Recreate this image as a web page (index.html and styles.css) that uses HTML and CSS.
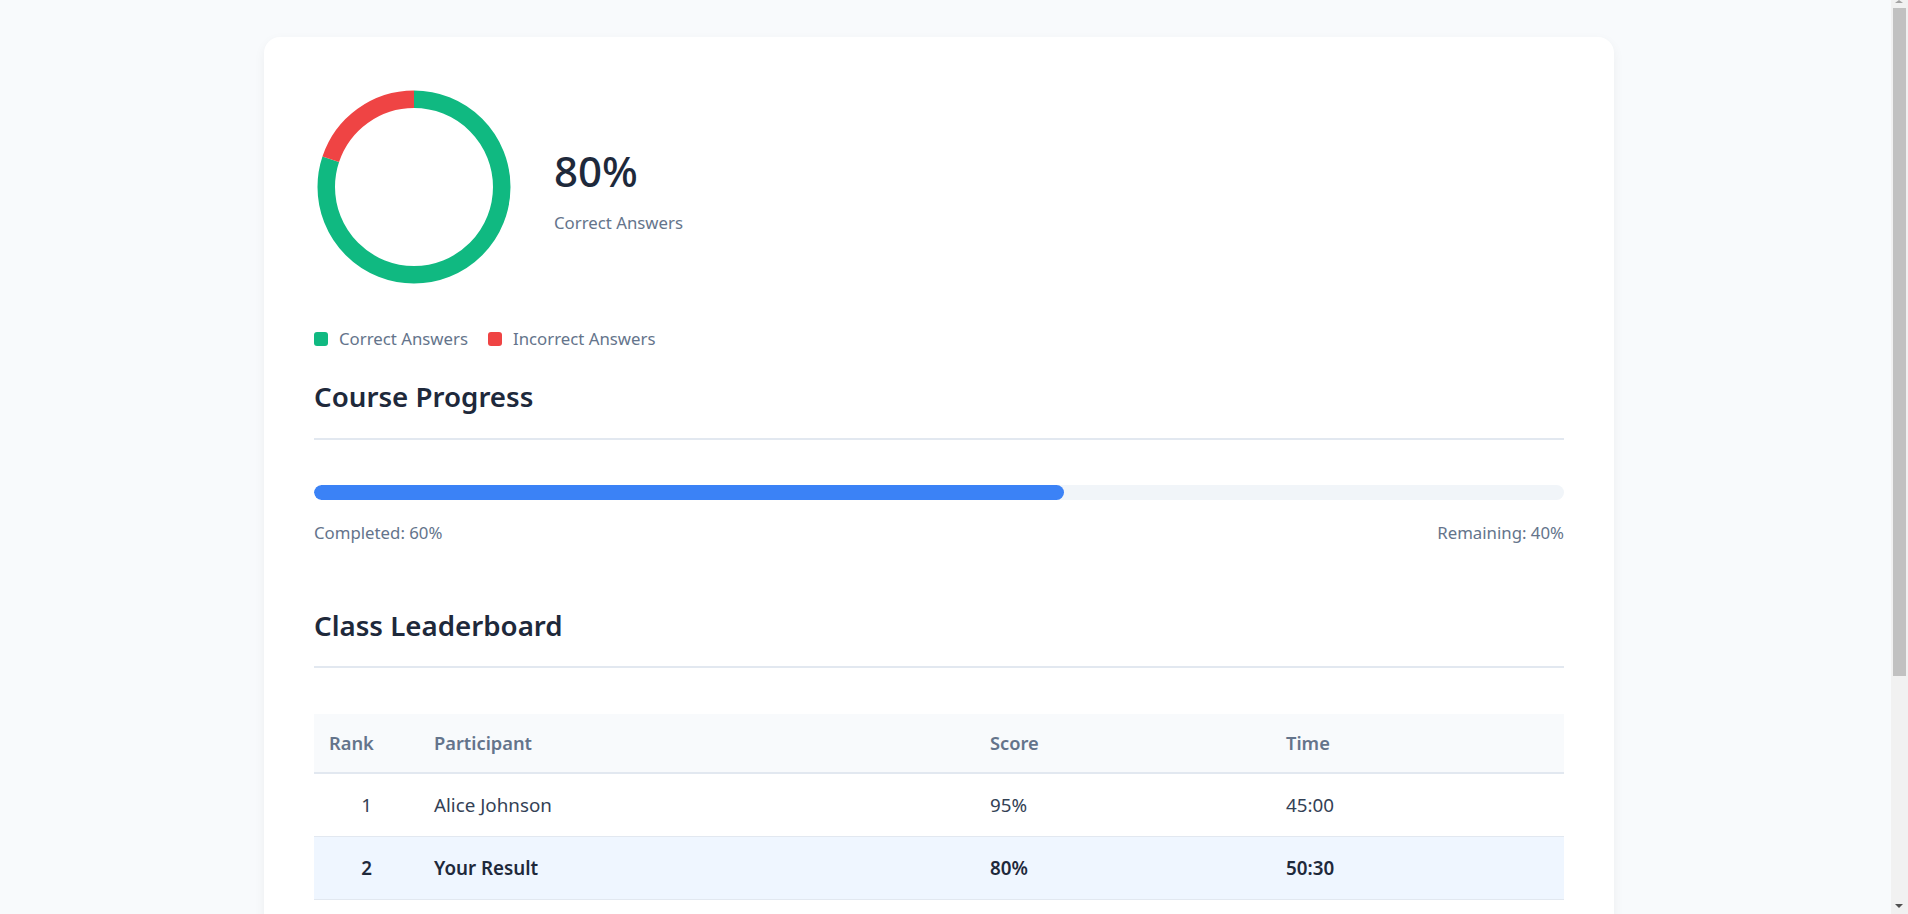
FILE: index.html
```html
<!DOCTYPE html>
<html lang="en">
<head>
<meta charset="utf-8">
<title>Quiz Results</title>
<link rel="stylesheet" href="styles.css">
</head>
<body>
<div class="page">
  <main class="card">
    <section class="summary">
      <div class="chart">
        <svg width="200" height="200" viewBox="0 0 200 200">
          <circle cx="100" cy="100" r="87.75" fill="none" stroke="#10b981" stroke-width="17.5" stroke-dasharray="441.08 551.35" transform="rotate(-90 100 100)"/>
          <circle cx="100" cy="100" r="87.75" fill="none" stroke="#ef4444" stroke-width="17.5" stroke-dasharray="110.27 551.35" stroke-dashoffset="-441.08" transform="rotate(-90 100 100)"/>
        </svg>
      </div>
      <div class="score">
        <div class="score-value">80%</div>
        <div class="score-label">Correct Answers</div>
      </div>
    </section>
    <div class="legend">
      <div class="legend-item"><span class="swatch swatch-green"></span>Correct Answers</div>
      <div class="legend-item"><span class="swatch swatch-red"></span>Incorrect Answers</div>
    </div>

    <section class="progress-section">
      <h2 class="section-title">Course Progress</h2>
      <div class="progress-track"><div class="progress-fill" style="width: 60%"></div></div>
      <div class="progress-labels">
        <span>Completed: 60%</span>
        <span>Remaining: 40%</span>
      </div>
    </section>

    <section class="leaderboard-section">
      <h2 class="section-title">Class Leaderboard</h2>
      <table class="leaderboard">
        <colgroup>
          <col class="col-rank">
          <col class="col-name">
          <col class="col-score">
          <col>
        </colgroup>
        <thead>
          <tr><th>Rank</th><th>Participant</th><th>Score</th><th>Time</th></tr>
        </thead>
        <tbody>
          <tr><td class="rank">1</td><td>Alice Johnson</td><td>95%</td><td>45:00</td></tr>
          <tr class="current"><td class="rank">2</td><td>Your Result</td><td>80%</td><td>50:30</td></tr>
          <tr><td class="rank">3</td><td>Michael Chen</td><td>78%</td><td>52:10</td></tr>
          <tr><td class="rank">4</td><td>Sofia Martinez</td><td>75%</td><td>48:45</td></tr>
        </tbody>
      </table>
    </section>
  </main>
</div>
<div class="scrollbar" aria-hidden="true">
  <span class="scroll-arrow scroll-arrow-up"></span>
  <div class="scroll-thumb"></div>
  <span class="scroll-arrow scroll-arrow-down"></span>
</div>
</body>
</html>
```

FILE: styles.css
```css
* { box-sizing: border-box; }

html, body {
  margin: 0;
  padding: 0;
}

body {
  background: #f8fafc;
  font-family: "Noto Sans", "Open Sans", sans-serif;
  color: #1e293b;
}

.page {
  padding: 37px 30px 50px 0;
}

.card {
  width: 1350px;
  margin: 0 auto;
  background: #ffffff;
  border-radius: 16px;
  box-shadow: 0 4px 12px rgba(15, 23, 42, 0.05);
  padding: 50px;
}

.summary {
  display: flex;
  align-items: center;
  gap: 40px;
}

.chart {
  width: 200px;
  height: 200px;
}

.chart svg { display: block; }

.score {
  padding-top: 8px;
}

.score-value {
  font-size: 42px;
  line-height: 48px;
  font-weight: 500;
  color: #1e293b;
}

.score-label {
  margin-top: 16px;
  font-size: 16.8px;
  line-height: 24px;
  color: #64748b;
}

.legend {
  display: flex;
  gap: 20px;
  margin-top: 40px;
  font-size: 16.8px;
  line-height: 24px;
  color: #64748b;
}

.legend-item {
  display: flex;
  align-items: center;
}

.swatch {
  width: 14px;
  height: 14px;
  border-radius: 3px;
  margin-right: 11px;
}

.swatch-green { background: #10b981; }
.swatch-red { background: #ef4444; }

.section-title {
  margin: 0;
  font-size: 27.7px;
  line-height: 33.6px;
  font-weight: 600;
  color: #1e293b;
  padding-bottom: 24px;
  border-bottom: 2px solid #e2e8f0;
}

.progress-section {
  margin-top: 29px;
}

.progress-track {
  margin-top: 45px;
  height: 15px;
  background: #f1f5f9;
  border-radius: 8px;
  overflow: hidden;
}

.progress-fill {
  height: 100%;
  background: #3b82f6;
  border-radius: 8px;
}

.progress-labels {
  margin-top: 21px;
  display: flex;
  justify-content: space-between;
  font-size: 16.8px;
  line-height: 24px;
  color: #64748b;
}

.leaderboard-section {
  margin-top: 64px;
}

.leaderboard {
  margin-top: 46px;
  width: 100%;
  border-collapse: collapse;
  font-size: 18.8px;
  line-height: 26px;
}

.col-rank { width: 105px; }
.col-name { width: 556px; }
.col-score { width: 296px; }

.leaderboard th {
  background: #f8fafc;
  color: #64748b;
  font-weight: 600;
  font-size: 18.3px;
  text-align: left;
  padding: 16px 15px;
  border-bottom: 2px solid #e2e8f0;
}

.leaderboard td {
  padding: 18px 15px;
  color: #334155;
  border-bottom: 1px solid #e2e8f0;
}

.leaderboard td.rank {
  text-align: center;
}

.leaderboard tr.current td {
  background: #eff6ff;
  font-weight: 600;
  color: #1e293b;
}

.scrollbar {
  position: fixed;
  top: 0;
  right: 0;
  width: 17px;
  height: 100vh;
  background: #f1f1f1;
}

.scroll-thumb {
  position: absolute;
  top: 8px;
  left: 2px;
  width: 13px;
  height: 668px;
  background: #c1c1c1;
}

.scroll-arrow {
  position: absolute;
  left: 4px;
  width: 0;
  height: 0;
  border-left: 4.5px solid transparent;
  border-right: 4.5px solid transparent;
}

.scroll-arrow-up {
  top: 0;
  border-bottom: 3px solid #a3a3a3;
}

.scroll-arrow-down {
  bottom: 6px;
  border-top: 4px solid #505050;
}
```
